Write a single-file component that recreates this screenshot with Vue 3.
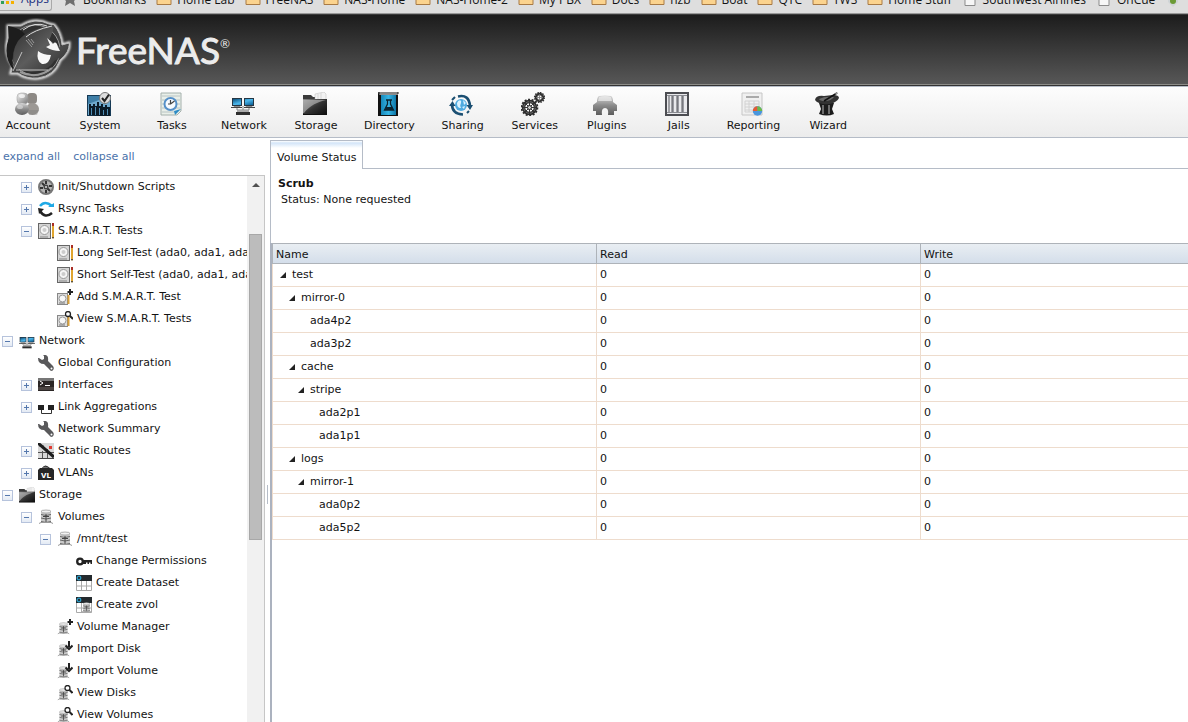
<template>
  <div class="page">
    <svg class="sprite" width="0" height="0" aria-hidden="true">
      <defs>
        <linearGradient id="silver" x1="0" y1="0" x2="1" y2="1">
          <stop offset="0" stop-color="#f4f4f4" />
          <stop offset="1" stop-color="#777" />
        </linearGradient>
        <linearGradient id="steel" x1="0" y1="0" x2="0" y2="1">
          <stop offset="0" stop-color="#d8d8d8" />
          <stop offset="0.5" stop-color="#8c8c8c" />
          <stop offset="1" stop-color="#5c5c5c" />
        </linearGradient>
        <linearGradient id="coal" x1="0" y1="0" x2="1" y2="1">
          <stop offset="0" stop-color="#8a8a8a" />
          <stop offset="0.5" stop-color="#333" />
          <stop offset="1" stop-color="#0c0c0c" />
        </linearGradient>
        <linearGradient id="sky" x1="0" y1="0" x2="1" y2="1">
          <stop offset="0" stop-color="#0b4f7c" />
          <stop offset="0.5" stop-color="#4db8ec" />
          <stop offset="1" stop-color="#0a5c92" />
        </linearGradient>
        <linearGradient id="cover" x1="0" y1="0" x2="1" y2="0">
          <stop offset="0" stop-color="#1687b8" />
          <stop offset="0.5" stop-color="#35b4e4" />
          <stop offset="1" stop-color="#0e77a8" />
        </linearGradient>
      </defs>

      <!-- toolbar, 24 x 24 -->
      <symbol id="account" viewBox="0 0 24 24">
        <rect x="12" y="1" width="10" height="11" rx="4" fill="#8d8985" />
        <ellipse cx="17.5" cy="17" rx="6.5" ry="6" fill="#9c9894" />
        <rect x="2" y="1" width="11" height="11" rx="4" fill="url(#silver)" stroke="#999" stroke-width="0.5" />
        <ellipse cx="7" cy="17" rx="7" ry="6" fill="url(#steel)" />
        <ellipse cx="5" cy="15" rx="3" ry="2" fill="#ddd" opacity="0.6" />
        <ellipse cx="7" cy="4" rx="3" ry="2" fill="#fff" opacity="0.7" />
        <path d="M0 18h7v4H3zM14 18h10l-2 5h-8z" fill="#777" opacity="0.35" />
      </symbol>
      <symbol id="system" viewBox="0 0 24 24">
        <rect y="3" width="24" height="21" fill="#163a55" />
        <rect x="1" y="4" width="22" height="19" fill="#6fa9cd" />
        <path d="M1 12L12 8h11v-4H1z" fill="#3f7ea6" />
        <path d="M2 23V12h2v2h2v-2h2v2h2v-4h2v4h2v-2h2v3h2v-2h2v2h3v10z" fill="#0b1b28" />
        <path d="M4.500 16v7M8.500 15v8M12.500 16v7M16.500 18v5M20.500 17v6" stroke="#4e8db5" stroke-width="1" />
        <circle cx="18" cy="6" r="5.500" fill="#ddd" stroke="#777" />
        <path d="M15 6l2.500 3L22 2.500" fill="none" stroke="#222" stroke-width="2" />
      </symbol>
      <symbol id="tasks" viewBox="0 0 24 24">
        <path d="M2 1h20v18l-4 4H2z" fill="#e9efe9" stroke="#a4b0ac" />
        <path d="M3 4h18M3 8h18M3 12h18M3 16h18M3 20h14" stroke="#b9c4c4" />
        <circle cx="11.500" cy="12" r="6" fill="#f7fbff" stroke="#5590c9" stroke-width="2" />
        <path d="M11.500 12V8M11.500 12l4-3M11.500 12H9" stroke="#444" stroke-width="1.200" fill="none" />
        <path d="M22 17l-6 6-1-4z" fill="#2d8bc6" />
      </symbol>
      <symbol id="network" viewBox="0 0 24 24">
        <path d="M1 6h10v8H1zM13 6h10v8H13z" fill="#263744" />
        <path d="M2 7h8v6H2zM14 7h8v6h-8z" fill="url(#sky)" />
        <path d="M3 14h6l1 2H2zM15 14h6l1 2h-8z" fill="#8b8b8b" />
        <path d="M0 15h11v1H0zM13 15h11v1H13z" fill="#444" />
        <path d="M6 16v2h12v-2M12 14v4" fill="none" stroke="#888" />
        <path d="M6 18h12v2H6z" fill="#aaa" />
        <path d="M5 20h14v3H5z" fill="#2e2e2e" />
      </symbol>
      <symbol id="storage" viewBox="0 0 24 24">
        <path d="M0 3h8l2 2h13v4H0z" fill="#3b3b3b" />
        <path d="M12 2l9-2 2 2v6H12z" fill="#f2f2f2" stroke="#bbb" stroke-width="0.5" />
        <path d="M15 2v5M18 1v6" stroke="#ccc" stroke-width="0.7" />
        <path d="M0 7h24v16H0z" fill="url(#coal)" />
        <path d="M0 8h23C15 10 7 13 1 21H0z" fill="#ccc" opacity="0.55" />
        <path d="M0 22h24v1H0z" fill="#111" />
      </symbol>
      <symbol id="directory" viewBox="0 0 24 24">
        <path d="M2 1l2-1h18v2H4z" fill="#e8e8e8" stroke="#222" />
        <path d="M2 1v23h20V3H4z" fill="#111" />
        <path d="M5 3h15v20H5z" fill="url(#cover)" />
        <path d="M10 8h6M11.500 8v4l-3 6h9l-3-6V8" fill="none" stroke="#0b2430" stroke-width="1.300" />
        <path d="M10 15h6l1.500 3h-9z" fill="#0b2430" />
      </symbol>
      <symbol id="sharing" viewBox="0 0 24 24">
        <circle cx="12" cy="13" r="6" fill="#4fabe0" />
        <path d="M8 11c2-4 5-3 4 0s-1 2 0 5c-3 0-4-2-4-5zM14 8l3 3-2 2zM13 15l3-1-1 3z" fill="#d9f2ff" />
        <path d="M9 4.500Q20 2 21 14M3 12Q3 22 14 22.500" fill="none" stroke="#1b4f72" stroke-width="2.600" />
        <path d="M17.500 13H24l-3 5zM0 14h6.500l-3-5z" fill="#1b4f72" />
        <path d="M3 8l3-3M18 21l2-2" stroke="#1b4f72" stroke-width="2" />
      </symbol>
      <symbol id="services" viewBox="0 0 24 24">
        <circle cx="8.500" cy="15.500" r="6" fill="none" stroke="#2c2c2c" stroke-width="3.400" />
        <circle cx="8.500" cy="15.500" r="8" fill="none" stroke="#2c2c2c" stroke-width="1.700" stroke-dasharray="2 1.600" />
        <circle cx="8.500" cy="15.500" r="5.800" fill="none" stroke="#999" stroke-width="0.600" />
        <path d="M8.500 9v13M2 15.500h13M4 11l9 9M13 11l-9 9" stroke="#333" />
        <circle cx="8.500" cy="15.500" r="2" fill="#ccc" stroke="#222" />
        <circle cx="18.500" cy="5.500" r="3.500" fill="none" stroke="#333" stroke-width="2.400" />
        <circle cx="18.500" cy="5.500" r="5" fill="none" stroke="#333" stroke-width="1.200" stroke-dasharray="1.500 1.100" />
        <path d="M18.500 2v7M15 5.500h7" stroke="#777" stroke-width="0.800" />
      </symbol>
      <symbol id="plugins" viewBox="0 0 24 24">
        <path d="M6 4q6-1 12 0 2 1 2 6l4 3v6h-3v4h-6q1-7-3-7t-3 7H3v-4H0v-6l4-3q0-5 2-6z" fill="url(#steel)" />
        <path d="M6 5q6-2 12 0l1 4H5z" fill="#eee" opacity="0.700" />
      </symbol>
      <symbol id="jails" viewBox="0 0 24 24">
        <rect x="1" y="1" width="22" height="22" fill="#e9e9ec" stroke="#4c4d52" stroke-width="2" />
        <path d="M2 3.500h20M2 20.500h20" stroke="#888a90" />
        <path d="M8 4v16M13 4v16M18 4v16" stroke="#9a9ba1" stroke-width="2" />
        <path d="M4 4v16M7 4v16M12 4v16M17 4v16" stroke="#55565c" />
      </symbol>
      <symbol id="reporting" viewBox="0 0 24 24">
        <path d="M2 1h20v22H2z" fill="#f0f0f0" stroke="#c6c6c6" />
        <path d="M6 5h13" stroke="#aaa" stroke-width="2" />
        <path d="M5 9h14v11H5zM5 12h14M5 15h14M5 18h14M9 9v11M14 9v11" fill="none" stroke="#d2d2d2" />
        <circle cx="17.500" cy="19" r="4.700" fill="#4a96dd" />
        <path d="M17.500 19h-4.700a4.700 4.700 0 0 1 4.700-4.700z" fill="#e65b32" />
        <path d="M17.500 19v-4.700a4.700 4.700 0 0 1 4.700 4.700z" fill="#6cba48" />
      </symbol>
      <symbol id="wizard" viewBox="0 0 24 24">
        <path d="M4 11h15l-2 6 2 5q-7 3-15 0l2-5z" fill="#1c1c1c" />
        <path d="M8 13v9M14 13v9" stroke="#888" stroke-width="1.500" />
        <path d="M0 8q1-5 9-4l9-1q6 0 6 3-2 4-9 6-12 1-15-4z" fill="#333" />
        <path d="M4 7q6-3 15-2-3 4-9 4-5 0-6-2z" fill="#6b6b6b" />
        <path d="M9 9L22 1" stroke="#111" stroke-width="1.500" />
        <path d="M20 2l3-1" stroke="#999" />
      </symbol>

      <!-- tree, 16 x 16 -->
      <symbol id="gauge" viewBox="0 0 16 16">
        <circle cx="8" cy="8" r="7" fill="#b5b5b5" stroke="#777" stroke-width="2" />
        <path d="M4 4l8 8M8 2v3M2 9h3M8 11v3M11 7h3" stroke="#333" stroke-width="2" />
        <circle cx="8" cy="8" r="2.500" fill="#444" />
        <circle cx="8" cy="8" r="1" fill="#ddd" />
      </symbol>
      <symbol id="sync" viewBox="0 0 16 16">
        <path d="M2 5q5-6 12 0" fill="none" stroke="#1fa9e6" stroke-width="2.500" />
        <path d="M10 6h6V2z" fill="#1fa9e6" />
        <path d="M2 10q5 8 12 2" fill="none" stroke="#222" stroke-width="2.500" />
        <path d="M0 7l6 1-5 5z" fill="#222" />
      </symbol>
      <symbol id="disk" viewBox="0 0 16 16">
        <rect x="0.500" y="0.500" width="12" height="15" fill="#d4d4d4" stroke="#666" />
        <circle cx="6.500" cy="7" r="4.500" fill="#f5f5f5" stroke="#999" />
        <circle cx="6.500" cy="7" r="2" fill="#ccc" />
        <path d="M2 14h8" stroke="#888" />
        <path d="M14 2h2v12l-1 2-1-2z" fill="#e0a52e" />
        <path d="M14 0h2v3h-2z" fill="#a92d25" />
        <path d="M14 14h2l-1 2z" fill="#333" />
      </symbol>
      <symbol id="smallDisk" viewBox="0 0 16 16">
        <rect x="0.500" y="4.500" width="10" height="11" fill="#ddd" stroke="#888" />
        <circle cx="5.500" cy="9.500" r="3.500" fill="#f7f7f7" stroke="#999" />
        <path d="M10.500 6h2v9h-2z" fill="#d9a13a" />
        <path d="M2 14h6" stroke="#777" />
      </symbol>
      <symbol id="diskAdd" viewBox="0 0 16 16">
        <use href="#smallDisk" />
        <path d="M13 0v6M10.500 3H16" stroke="#222" stroke-width="2" />
      </symbol>
      <symbol id="diskView" viewBox="0 0 16 16">
        <use href="#smallDisk" />
        <circle cx="11" cy="3" r="2.500" fill="#fff" stroke="#222" stroke-width="1.300" />
        <path d="M13 5l3 3" stroke="#222" stroke-width="2" />
      </symbol>
      <symbol id="wrench" viewBox="0 0 16 16">
        <path d="M1 3l3 2 2-1V1l-1-1q6-1 5 6l5 5q2 3-1 5-2 0-3-2L6 9Q0 9 0 3z" fill="#59595b" />
        <circle cx="13.500" cy="13.500" r="1" fill="#fff" />
      </symbol>
      <symbol id="terminal" viewBox="0 0 16 16">
        <path d="M0 1h16v13H0z" fill="#2b2625" />
        <path d="M0 1h16v3H0z" fill="#777" />
        <path d="M0 10h16v3H0z" fill="#4b4442" />
        <path d="M2 4l3 2-3 2M7 8.500h5" fill="none" stroke="#fff" />
      </symbol>
      <symbol id="link" viewBox="0 0 16 16">
        <path d="M0 6h6v5H0zM10 6h6v5h-6z" fill="#222" />
        <path d="M3.500 11v3.500h10V11" fill="none" stroke="#333" />
      </symbol>
      <symbol id="routes" viewBox="0 0 16 16">
        <path d="M0 0h16v16H0z" fill="#d8d8d8" />
        <path d="M0 9.500h16M4.500 16V8M9.500 16V6M1 3h5" stroke="#555" />
        <path d="M0 0l16 14" stroke="#1d1d1d" stroke-width="3" />
        <path d="M11 3h3v3h-3z" fill="#e23b32" />
        <path d="M0 15.500h16" stroke="#444" />
      </symbol>
      <symbol id="vlan" viewBox="0 0 16 16">
        <path d="M0 5l2-2h2q3-5 8 0h2l2 2v10H0z" fill="#262626" />
        <path d="M4 3q3-3 7 0z" fill="#777" />
        <text x="3" y="13" fill="#fff" font-family="DejaVu Sans" font-weight="bold" font-size="7">VL</text>
      </symbol>
      <symbol id="volume" viewBox="0 0 16 16">
        <path d="M3 2q5-2 10 0v12H3z" fill="#c9c9c9" />
        <ellipse cx="8" cy="2.500" rx="5" ry="1.500" fill="#f2f2f2" stroke="#888" stroke-width="0.600" />
        <path d="M3 5.500q5 2 10 0M3 9q5 2 10 0M3 12.500q5 2 10 0" fill="none" stroke="#666" />
        <path d="M8 5v8M5 7.500h6" stroke="#444" />
        <path d="M1 14.500l2-1h10l2 1" fill="none" stroke="#999" />
      </symbol>
      <symbol id="volumeAdd" viewBox="0 0 16 16">
        <use href="#volume" x="0" y="3" width="13" height="13" />
        <path d="M13 0v6M10.500 3H16" stroke="#222" stroke-width="2" />
      </symbol>
      <symbol id="volumeImport" viewBox="0 0 16 16">
        <use href="#volume" x="0" y="3" width="13" height="13" />
        <path d="M12 0v6M8.500 4.500l3.500 3.500 3.500-3.500" fill="none" stroke="#222" stroke-width="2" />
      </symbol>
      <symbol id="volumeView" viewBox="0 0 16 16">
        <use href="#volume" x="0" y="3" width="13" height="13" />
        <circle cx="10.500" cy="3" r="2.500" fill="#fff" stroke="#222" stroke-width="1.300" />
        <path d="M12.500 5l3 3" stroke="#222" stroke-width="2" />
      </symbol>
      <symbol id="key" viewBox="0 0 16 16">
        <circle cx="4" cy="8.500" r="2.800" fill="none" stroke="#222" stroke-width="2.300" />
        <path d="M7 7h9v4h-1.500V9.500H13V11h-1.500V9.500H10V11H7z" fill="#222" />
      </symbol>
      <symbol id="dataset" viewBox="0 0 16 16">
        <path d="M0.500 1.500h15v14H0.500z" fill="#fff" stroke="#aaa" />
        <path d="M0 11h16M5.500 6v10M10.500 6v10" stroke="#aaa" />
        <path d="M0 0h16v6H0z" fill="#242a2e" />
        <circle cx="3" cy="3" r="1.800" fill="none" stroke="#2c9fc9" stroke-width="1.300" />
      </symbol>
      <symbol id="zvol" viewBox="0 0 16 16">
        <use href="#dataset" />
        <use href="#volume" x="5" y="5" width="11" height="11" />
      </symbol>

      <!-- bookmarks, 16 x 16 -->
      <symbol id="apps" viewBox="0 0 16 16">
        <path d="M1 5h3v3H1zM1 10h3v3H1z" fill="#2f9e58" />
        <path d="M6 5h3v3H6zM6 10h3v3H6z" fill="#f5b100" />
        <path d="M11 5h3v3h-3zM11 10h3v3h-3z" fill="#f5b100" />
      </symbol>
      <symbol id="star" viewBox="0 0 16 16">
        <path d="M8 0l2 5h6l-4 4 1 5-5-3-5 3 1-5-4-4h6z" fill="#6f6f6f" />
      </symbol>
      <symbol id="folder" viewBox="0 0 16 16">
        <path d="M1 2h6l1 2h7v8.500H1z" fill="#fbd38e" stroke="#a87a45" />
      </symbol>
      <symbol id="file" viewBox="0 0 16 16">
        <path d="M3 0h10v13.500H3z" fill="#f6f6f6" stroke="#8b8b8b" />
      </symbol>
      <symbol id="pin" viewBox="0 0 16 16">
        <path d="M3 4h10v6l-5 5-5-5z" fill="#cfd4d6" />
        <circle cx="8" cy="9" r="3" fill="#6b9a35" />
      </symbol>
    </svg>

    <nav class="bookmarks" aria-label="Bookmarks">
      <a
        v-for="mark in bookmarks"
        :key="mark.label"
        href="#"
        class="bookmark"
        :class="mark.icon"
      >
        <svg class="mark-icon" aria-hidden="true"><use :href="'#' + mark.icon" /></svg>
        <span>{{ mark.label }}</span>
      </a>
    </nav>

    <header class="banner">
      <svg class="logo" viewBox="0 0 70 64" aria-hidden="true">
        <defs>
          <filter id="halo" x="-20%" y="-20%" width="140%" height="140%">
            <feGaussianBlur stdDeviation="1.200" />
          </filter>
          <linearGradient id="shark" x1="0" y1="0" x2="1" y2="1">
            <stop offset="0" stop-color="#2d2d2d" />
            <stop offset="0.500" stop-color="#5c5c5c" />
            <stop offset="1" stop-color="#292929" />
          </linearGradient>
        </defs>
        <path
          d="M4 8L17 8Q31 -1 45 6L50 7Q57 15 58 27L65 25Q66 34 56 42Q50 58 34 60Q22 61 14 55L7 55L9 48Q0 36 4 20z"
          fill="none"
          stroke="#f2f2f2"
          stroke-width="3"
          filter="url(#halo)"
        />
        <path
          d="M4 8L17 8Q31 -1 45 6L50 7Q57 15 58 27L65 25Q66 34 56 42Q50 58 34 60Q22 61 14 55L7 55L9 48Q0 36 4 20z"
          fill="#444"
          stroke="#bbb"
        />
        <circle cx="31" cy="32" r="25" fill="#303030" stroke="#999" />
        <path d="M4 8q10 1 17 8Q4 30 10 53 -2 38 5 20z" fill="#1d1d1d" />
        <path d="M14 23Q24 11 50 7Q48 17 45 22L56 29L65 26Q62 38 50 43Q45 53 27 54L10 50Q7 34 14 23z" fill="url(#shark)" />
        <path d="M19 12Q31 3 43 8M22 19Q30 12 48 8" fill="none" stroke="#ddd" />
        <path d="M16 54Q33 62 48 50" fill="none" stroke="#999" stroke-width="2" />
        <path d="M43 20q4 3 6 6 3-4 5 3l2 4q-8 0-14-4l4-2z" fill="#f5f5f5" />
        <path d="M34 33q5 4 13 4-2 10-9 9-6-3-4-13z" fill="#f8f8f8" />
        <path d="M22 22l6 7M24 21l5 6M27 21l3 4" stroke="#999" />
        <path d="M18 34L9 53M12 52h32" stroke="#c2c2c2" />
      </svg>
      <span class="brand">FreeNAS<sup>®</sup></span>
    </header>

    <nav class="toolbar" aria-label="Main">
      <button v-for="tool in tools" :key="tool" type="button" class="tool">
        <svg class="tool-icon" aria-hidden="true"><use :href="'#' + tool.toLowerCase()" /></svg>
        <span>{{ tool }}</span>
      </button>
    </nav>

    <div class="workspace">
      <aside class="sidebar">
        <div class="tree-actions">
          <a href="#">expand all</a>
          <a href="#">collapse all</a>
        </div>
        <div class="tree-pane">
          <ul class="tree">
            <li
              v-for="node in nodes"
              :key="node.label"
              class="node"
              :style="{ paddingLeft: node.level * 19 + 2 + 'px' }"
            >
              <button
                v-if="node.open !== undefined"
                type="button"
                class="toggle"
                :class="{ open: node.open }"
                :aria-label="node.label"
                :aria-expanded="node.open"
                @click="node.open = !node.open"
              ></button>
              <span v-else class="toggle-space"></span>
              <svg class="node-icon" aria-hidden="true"><use :href="'#' + node.icon" /></svg>
              <a href="#">{{ node.label }}</a>
            </li>
          </ul>
          <div class="scrollbar">
            <span class="arrow-up"></span>
            <div class="thumb"></div>
          </div>
        </div>
      </aside>

      <div class="splitter"><span class="grip"></span></div>

      <main class="content">
        <div class="tabs" role="tablist">
          <button type="button" role="tab" aria-selected="true" class="tab">Volume Status</button>
          <span class="tab-rest"></span>
        </div>
        <section class="scrub">
          <strong>Scrub</strong>
          <p>Status: None requested</p>
        </section>
        <div class="grid">
          <table>
            <colgroup>
              <col class="fixed" />
              <col class="fixed" />
              <col />
            </colgroup>
            <thead>
              <tr>
                <th>Name</th>
                <th>Read</th>
                <th>Write</th>
              </tr>
            </thead>
            <tbody>
              <tr v-for="row in rows" :key="row.name">
                <td>
                  <div class="name" :style="{ paddingLeft: row.level * 9 + 4 + 'px' }">
                    <span class="caret" :class="{ leaf: row.leaf }"></span>
                    {{ row.name }}
                  </div>
                </td>
                <td>{{ row.read }}</td>
                <td>{{ row.write }}</td>
              </tr>
            </tbody>
          </table>
        </div>
      </main>
    </div>
  </div>
</template>

<script setup>
import { ref } from 'vue'

const bookmarks = [
  { label: 'Apps', icon: 'apps' },
  { label: 'Bookmarks', icon: 'star' },
  { label: 'Home Lab', icon: 'folder' },
  { label: 'FreeNAS', icon: 'folder' },
  { label: 'NAS-Home', icon: 'folder' },
  { label: 'NAS-Home-2', icon: 'folder' },
  { label: 'My PBX', icon: 'folder' },
  { label: 'Docs', icon: 'folder' },
  { label: 'nzb', icon: 'folder' },
  { label: 'Boat', icon: 'folder' },
  { label: 'QTC', icon: 'folder' },
  { label: 'TWS', icon: 'folder' },
  { label: 'Home Stuff', icon: 'folder' },
  { label: 'Southwest Airlines', icon: 'file' },
  { label: 'OnCue', icon: 'file' },
  { label: '', icon: 'pin' }
]

const tools = [
  'Account', 'System', 'Tasks', 'Network', 'Storage', 'Directory',
  'Sharing', 'Services', 'Plugins', 'Jails', 'Reporting', 'Wizard'
]

const nodes = ref([
  { level: 1, label: 'Init/Shutdown Scripts', icon: 'gauge', open: false },
  { level: 1, label: 'Rsync Tasks', icon: 'sync', open: false },
  { level: 1, label: 'S.M.A.R.T. Tests', icon: 'disk', open: true },
  { level: 2, label: 'Long Self-Test (ada0, ada1, ada2)', icon: 'disk' },
  { level: 2, label: 'Short Self-Test (ada0, ada1, ada2)', icon: 'disk' },
  { level: 2, label: 'Add S.M.A.R.T. Test', icon: 'diskAdd' },
  { level: 2, label: 'View S.M.A.R.T. Tests', icon: 'diskView' },
  { level: 0, label: 'Network', icon: 'network', open: true },
  { level: 1, label: 'Global Configuration', icon: 'wrench' },
  { level: 1, label: 'Interfaces', icon: 'terminal', open: false },
  { level: 1, label: 'Link Aggregations', icon: 'link', open: false },
  { level: 1, label: 'Network Summary', icon: 'wrench' },
  { level: 1, label: 'Static Routes', icon: 'routes', open: false },
  { level: 1, label: 'VLANs', icon: 'vlan', open: false },
  { level: 0, label: 'Storage', icon: 'storage', open: true },
  { level: 1, label: 'Volumes', icon: 'volume', open: true },
  { level: 2, label: '/mnt/test', icon: 'volume', open: true },
  { level: 3, label: 'Change Permissions', icon: 'key' },
  { level: 3, label: 'Create Dataset', icon: 'dataset' },
  { level: 3, label: 'Create zvol', icon: 'zvol' },
  { level: 2, label: 'Volume Manager', icon: 'volumeAdd' },
  { level: 2, label: 'Import Disk', icon: 'volumeImport' },
  { level: 2, label: 'Import Volume', icon: 'volumeImport' },
  { level: 2, label: 'View Disks', icon: 'volumeView' },
  { level: 2, label: 'View Volumes', icon: 'volumeView' }
])

const rows = [
  { level: 0, name: 'test', read: 0, write: 0 },
  { level: 1, name: 'mirror-0', read: 0, write: 0 },
  { level: 2, name: 'ada4p2', read: 0, write: 0, leaf: true },
  { level: 2, name: 'ada3p2', read: 0, write: 0, leaf: true },
  { level: 1, name: 'cache', read: 0, write: 0 },
  { level: 2, name: 'stripe', read: 0, write: 0 },
  { level: 3, name: 'ada2p1', read: 0, write: 0, leaf: true },
  { level: 3, name: 'ada1p1', read: 0, write: 0, leaf: true },
  { level: 1, name: 'logs', read: 0, write: 0 },
  { level: 2, name: 'mirror-1', read: 0, write: 0 },
  { level: 3, name: 'ada0p2', read: 0, write: 0, leaf: true },
  { level: 3, name: 'ada5p2', read: 0, write: 0, leaf: true }
]
</script>

<style>
body {
  background: #fff;
}
</style>

<style scoped>
.page {
  display: flex;
  flex-direction: column;
  height: 100vh;
  overflow: hidden;
  color: #131313;
  font-family: Verdana, "DejaVu Sans", sans-serif;
  font-size: 11px;
  line-height: 16px;
}

.page button {
  font: inherit;
  color: inherit;
}

.page a {
  color: inherit;
  text-decoration: none;
}

.sprite {
  position: absolute;
}

.bookmarks {
  display: flex;
  align-items: flex-end;
  gap: 10px;
  height: 13px;
  flex: none;
  overflow: hidden;
  background: #dedede;
  border-bottom: 1px solid #999;
  font-family: "Segoe UI", "Open Sans", sans-serif;
  font-size: 12px;
  white-space: nowrap;
}

.bookmark {
  display: flex;
  flex: none;
  align-items: center;
  gap: 5px;
  padding-bottom: 5px;
}

.bookmark.apps {
  padding: 0 2px 3px 0;
  margin-bottom: 2px;
  border: solid #a9a9a9;
  border-width: 0 1px 1px 0;
  border-radius: 0 0 3px 0;
}

.page .bookmark.apps {
  color: #1c2f80;
}

.mark-icon {
  width: 16px;
  height: 16px;
}

.banner {
  display: flex;
  align-items: center;
  gap: 2px;
  flex: none;
  box-sizing: border-box;
  height: 72px;
  padding-left: 4px;
  background: linear-gradient(#1c1c1c, #585858);
  border-top: 1px solid #3a3a3a;
  border-bottom: 1px solid #333;
  box-shadow: inset 0 -1px #8c8c88;
}

.logo {
  width: 70px;
  height: 64px;
}

.brand {
  color: #ececec;
  font-family: Lato, sans-serif;
  font-size: 37px;
  line-height: 48px;
  -webkit-text-stroke: 1px #ececec;
}

.brand sup {
  font-size: 12px;
  line-height: 12px;
  vertical-align: 16px;
  -webkit-text-stroke: 0;
}

.toolbar {
  display: flex;
  gap: 16px;
  flex: none;
  box-sizing: border-box;
  height: 52px;
  background: linear-gradient(#fdfdfd, #ececec);
  border-top: 1px solid #b5bcc7;
  border-bottom: 1px solid #b5bcc7;
}

.tool {
  display: flex;
  flex-direction: column;
  align-items: center;
  min-width: 56px;
  padding: 5px 4px 0;
  gap: 2px;
  border: 0;
  background: none;
}

.tool-icon {
  width: 24px;
  height: 24px;
  margin-right: 3px;
}

.workspace {
  display: flex;
  flex: 1;
  min-height: 0;
}

.sidebar {
  display: flex;
  flex-direction: column;
  width: 265px;
  flex: none;
}

.tree-actions {
  display: flex;
  gap: 13px;
  padding: 11px 3px 10px;
}

.page .tree-actions a {
  color: #4a72aa;
}

.tree-pane {
  display: flex;
  flex: 1;
  min-height: 0;
  border: solid #c6c6c6;
  border-width: 1px 1px 0 0;
}

.tree {
  flex: 1;
  min-width: 0;
  margin: 0;
  padding: 0;
  overflow: hidden;
  list-style: none;
}

.node {
  display: flex;
  align-items: center;
  height: 22px;
  white-space: nowrap;
}

.node a {
  margin-left: 4px;
}

.toggle,
.toggle-space {
  flex: none;
  box-sizing: border-box;
  width: 11px;
  height: 11px;
  margin-right: 6px;
}

.toggle {
  padding: 0;
  border: 1px solid #b6c3dc;
  background:
    linear-gradient(#5578ad, #5578ad) center / 5px 1px no-repeat,
    linear-gradient(#5578ad, #5578ad) center / 1px 5px no-repeat,
    linear-gradient(#fff, #e3eaf4);
}

.toggle.open {
  background:
    linear-gradient(#5578ad, #5578ad) center / 5px 1px no-repeat,
    linear-gradient(#fff, #e3eaf4);
}

.node-icon {
  flex: none;
  width: 16px;
  height: 16px;
}

.scrollbar {
  display: flex;
  flex-direction: column;
  align-items: center;
  width: 17px;
  flex: none;
  background: #f1f1f1;
}

.arrow-up {
  margin: 7px 0 47px;
  border: solid transparent;
  border-width: 0 4px 4px;
  border-bottom-color: #505050;
}

.thumb {
  box-sizing: border-box;
  width: 13px;
  height: 56%;
  background: #bcbcbc;
  border: 1px solid #a8a8a8;
}

.splitter {
  display: flex;
  align-items: center;
  justify-content: center;
  width: 5px;
  flex: none;
  padding-top: 128px;
}

.grip {
  width: 1px;
  height: 19px;
  background: #b5bcc7;
}

.content {
  display: flex;
  flex-direction: column;
  flex: 1;
  min-width: 0;
  padding-top: 2px;
}

.tabs {
  display: flex;
}

.tab {
  height: 29px;
  padding: 6px 6px 0;
  border: solid #b5bcc7;
  border-width: 1px 1px 0;
  background: linear-gradient(#fff, #d3e5f8 2px, #fff 7px);
}

.tab-rest {
  flex: 1;
  border-bottom: 1px solid #b5bcc7;
}

.scrub {
  box-sizing: border-box;
  height: 74px;
  padding: 7px;
  border-left: 1px solid #b5bcc7;
}

.scrub p {
  margin: 0 3px;
}

.grid {
  flex: 1;
  border-left: 2px solid #abb2bf;
}

table {
  width: 100%;
  table-layout: fixed;
  border-spacing: 0;
}

.fixed {
  width: 324px;
}

th,
td {
  box-sizing: border-box;
  padding: 0 3px;
  text-align: left;
  font-weight: normal;
}

th {
  height: 21px;
  padding-top: 2px;
  background: linear-gradient(#e9eef3, #d4deea);
  border: solid #aeb3b9;
  border-width: 1px 0 1px 1px;
}

td {
  height: 23px;
  border: solid #eedccd;
  border-width: 0 0 1px 1px;
}

.name {
  display: flex;
  align-items: center;
}

.caret {
  width: 6px;
  height: 6px;
  margin-right: 6px;
  background: #222;
  clip-path: polygon(100% 0, 100% 100%, 0 100%);
}

.caret.leaf {
  background: none;
}
</style>
